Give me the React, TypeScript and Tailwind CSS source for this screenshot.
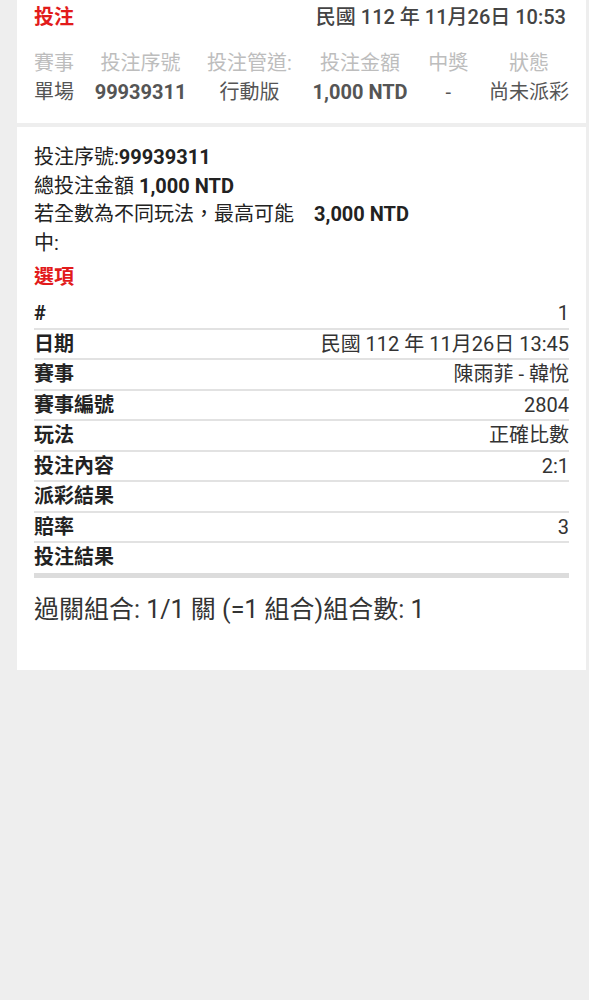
import React from 'react';

const font = { fontFamily: 'Roboto, "Noto Sans CJK TC", sans-serif' };

const summary = [
  { label: '賽事', value: '單場', bold: false },
  { label: '投注序號', value: '99939311', bold: true },
  { label: '投注管道:', value: '行動版', bold: false },
  { label: '投注金額', value: '1,000 NTD', bold: true },
  { label: '中獎', value: '-', bold: false },
  { label: '狀態', value: '尚未派彩', bold: false },
];

const rows = [
  ['#', '1'],
  ['日期', '民國 112 年 11月26日 13:45'],
  ['賽事', '陳雨菲 - 韓悅'],
  ['賽事編號', '2804'],
  ['玩法', '正確比數'],
  ['投注內容', '2:1'],
  ['派彩結果', ''],
  ['賠率', '3'],
  ['投注結果', ''],
];

const App: React.FC = () => {
  return (
    <div className="min-h-screen bg-[#eeeeee] text-[20px]" style={font}>
      <div className="ml-[17px] w-[569px] bg-white px-[17px] pt-[3px] pb-[16px]">
        <div className="flex justify-between items-center h-[28px] leading-[28px]">
          <span className="font-bold text-[#e21b1b]">投注</span>
          <span className="font-medium text-[#444] pr-[3px]">民國 112 年 11月26日 10:53</span>
        </div>
        <div className="mt-[18px] flex justify-between">
          {summary.map((s) => (
            <div key={s.label} className="flex flex-col items-center">
              <span className="leading-[29px] text-[#bdbdbd]">{s.label}</span>
              <span className={`leading-[29px] text-[#555] ${s.bold ? 'font-bold' : ''}`}>{s.value}</span>
            </div>
          ))}
        </div>
      </div>

      <div className="ml-[17px] mt-[4px] w-[569px] bg-white px-[17px] pt-[16px] pb-[44px] text-[#222]">
        <div className="leading-[28.5px]">
          投注序號:<span className="font-bold">99939311</span>
        </div>
        <div className="leading-[28.5px]">
          總投注金額 <span className="font-bold">1,000 NTD</span>
        </div>
        <div className="flex leading-[28.5px]">
          <div className="w-[280px]">若全數為不同玩法，最高可能中:</div>
          <div className="font-bold">3,000 NTD</div>
        </div>
        <div className="mt-[6px] leading-[28px] font-bold text-[#e21b1b]">選項</div>

        <div className="mt-[8px]">
          {rows.map(([k, v], i) => (
            <div
              key={k + i}
              className={`flex justify-between items-center h-[28.5px] ${i < rows.length - 1 ? 'border-b-2 border-[#e2e2e2] box-content' : ''}`}
            >
              <span className="font-bold">{k}</span>
              <span className="text-[#333]">{v}</span>
            </div>
          ))}
          <div className="h-[5px] bg-[#dcdcdc] mt-[1px]" />
        </div>

        <div className="mt-[15px] text-[25px] leading-[33px] text-[#333]">
          過關組合: 1/1 關 (=1 組合)組合數: 1
        </div>
      </div>
    </div>
  );
};

export default App;
